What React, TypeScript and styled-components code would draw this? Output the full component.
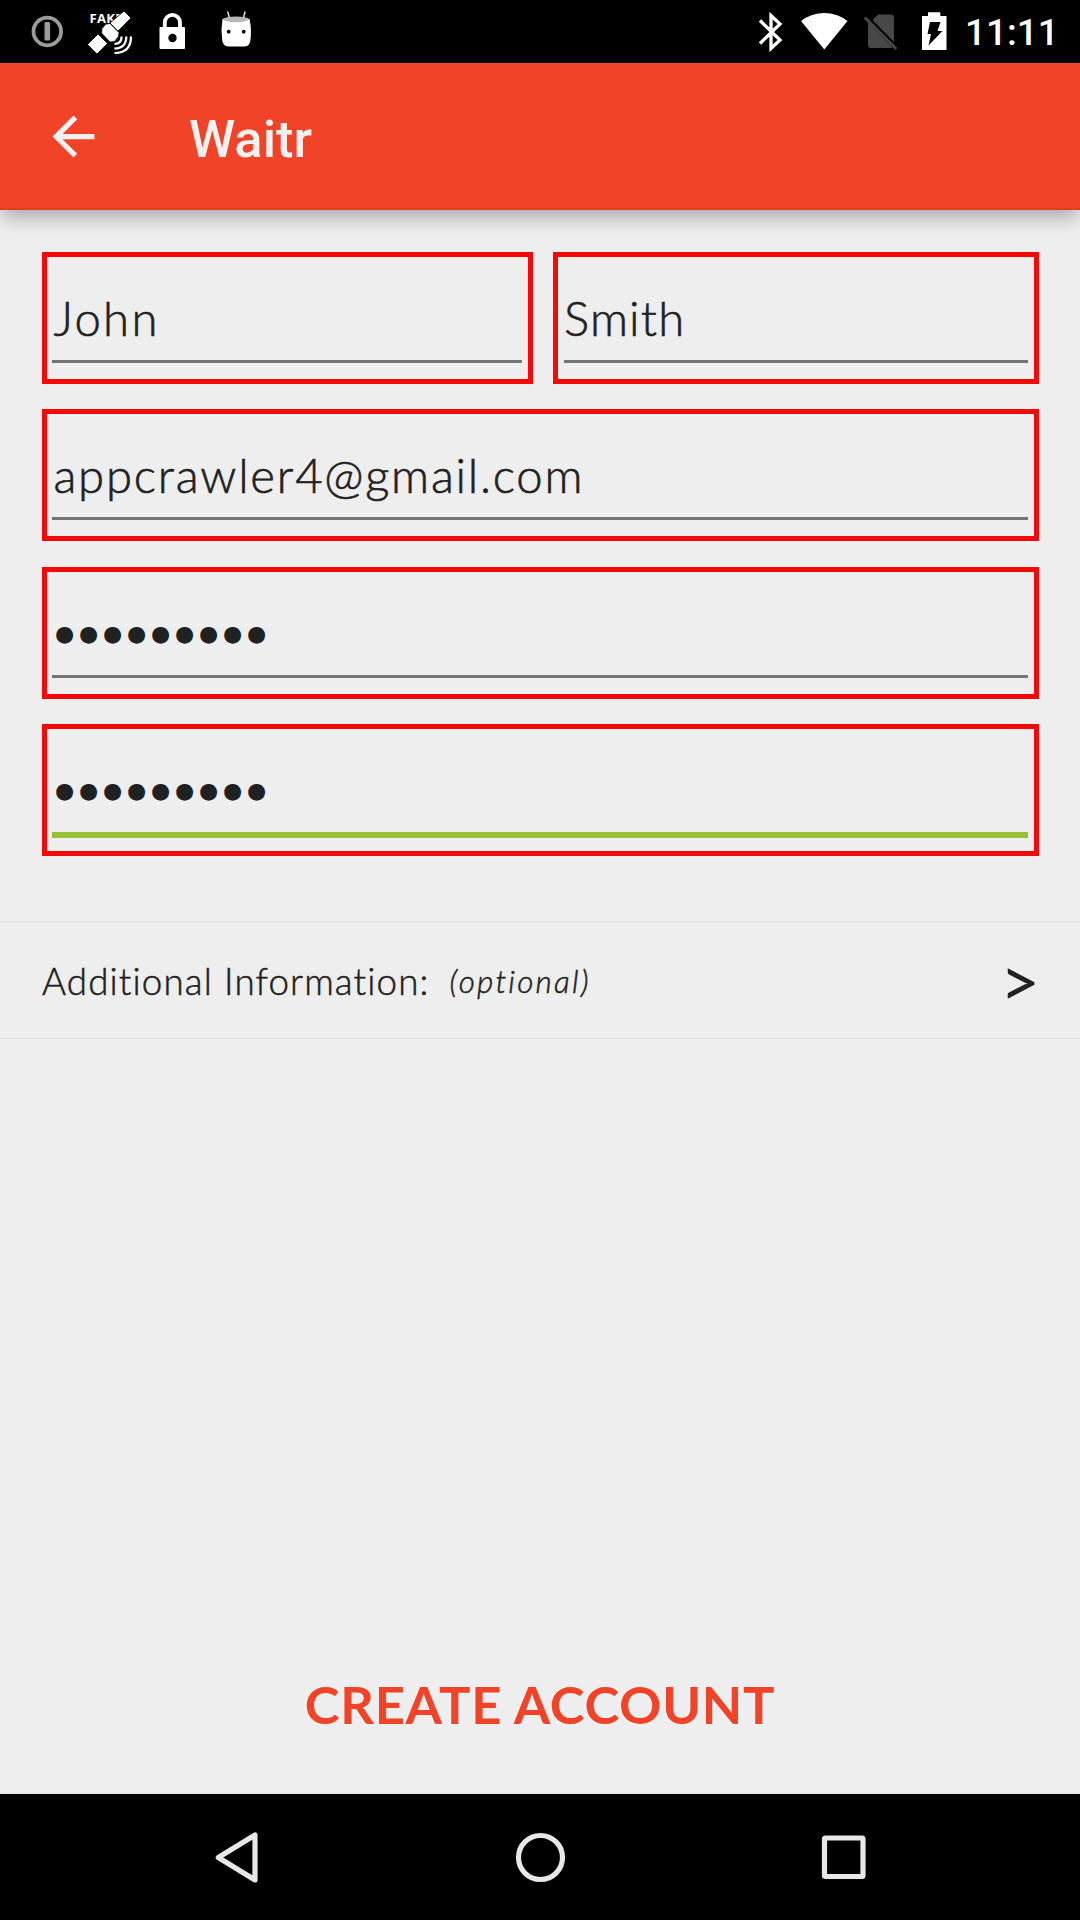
import React from 'react';
import styled, { createGlobalStyle } from 'styled-components';

const GlobalStyle = createGlobalStyle`
  * { box-sizing: border-box; }
  body { margin: 0; background: #eeeeee; }
`;

const Screen = styled.div`
  width: 1080px;
  height: 1920px;
  display: flex;
  flex-direction: column;
  overflow: hidden;
  background: #eeeeee;
  color: #212121;
  font-family: Lato, 'Open Sans', sans-serif;
`;

const StatusBar = styled.header`
  height: 63px;
  flex: none;
  display: flex;
  justify-content: space-between;
  background: #000;
  padding: 0 24px 0 31px;
`;

const StatusGroup = styled.div`
  display: flex;
  align-items: flex-start;
`;

const StatusIcon = styled.svg<{ $gap?: number }>`
  display: block;
  flex: none;
  margin-left: ${(p) => p.$gap ?? 0}px;
`;

const Clock = styled.span`
  margin-left: 17px;
  width: 91px;
  font: 500 37px/65px Roboto, sans-serif;
  color: #fff;
  white-space: nowrap;
`;

const AppBar = styled.div`
  position: relative;
  z-index: 1;
  height: 147px;
  flex: none;
  display: flex;
  align-items: center;
  padding: 2px 0 0 42px;
  background: #f04328;
  border-bottom: 2px solid #e83a20;
  box-shadow: 0 10px 18px -2px rgba(0, 0, 0, 0.28);
`;

const Title = styled.h1`
  margin: 4px 0 0 84px;
  font: 500 52.5px/62px Roboto, sans-serif;
  color: #f3f1f0;
`;

const Form = styled.form`
  display: flex;
  flex-direction: column;
  gap: 25.33px;
  padding: 42px 41px 0 42px;
`;

const NameRow = styled.div`
  display: grid;
  grid-template-columns: 491px 486px;
  gap: 20px;
`;

const Field = styled.div<{ $inset?: number }>`
  height: 132px;
  border: 5px solid #f20a08;
  padding: 33px 6px 0 ${(p) => p.$inset ?? 5}px;
`;

const Value = styled.div<{ $spacing?: number; $indent?: number }>`
  height: 70px;
  padding-left: ${(p) => p.$indent ?? 1.5}px;
  font-size: 47.25px;
  font-weight: 300;
  line-height: 56px;
  letter-spacing: ${(p) => p.$spacing ?? 0}px;
  white-space: nowrap;
  -webkit-text-stroke: 0.6px #212121;
`;

const Secret = styled(Value)`
  padding-left: 3px;
  font-family: 'DejaVu Sans', sans-serif;
  font-size: 22px;
  font-weight: 400;
  line-height: 57px;
  -webkit-text-stroke: 0;
`;

const Underline = styled.div<{ $active?: boolean }>`
  height: ${(p) => (p.$active ? 6 : 3)}px;
  background: ${(p) => (p.$active ? '#97c035' : '#757575')};
`;

const InfoRow = styled.div`
  height: 118px;
  margin-top: 65px;
  flex: none;
  display: flex;
  align-items: center;
  padding: 2px 44px 0 42px;
  border-top: 2px solid #e7e7e7;
  border-bottom: 1px solid #dfdfdf;
`;

const InfoLabel = styled.span`
  font-size: 36.75px;
  font-weight: 300;
  letter-spacing: 1.12px;
  white-space: nowrap;
  -webkit-text-stroke: 0.5px #212121;
`;

const InfoHint = styled.em`
  margin-left: 20px;
  font-size: 31.5px;
  font-weight: 300;
  letter-spacing: 2.2px;
  -webkit-text-stroke: 0.5px #212121;
`;

const Chevron = styled.span`
  margin-left: auto;
  margin-right: -4px;
  font-size: 69px;
  line-height: 58px;
`;

const CreateButton = styled.button`
  margin-top: auto;
  height: 178px;
  flex: none;
  border: 0;
  padding: 0 0 2px;
  background: transparent;
  color: #f04328;
  font-family: Lato, sans-serif;
  font-size: 52.5px;
  font-weight: 700;
  line-height: 62px;
  letter-spacing: 0.7px;
  white-space: nowrap;
`;

const NavBar = styled.nav`
  height: 126px;
  flex: none;
  display: flex;
  justify-content: space-between;
  align-items: center;
  padding: 0 201px 0 202px;
  background: #000;
`;

const NavIcon = styled.svg`
  display: block;
  fill: none;
  stroke: #e8e8e8;
  stroke-width: 5.2;
  stroke-linejoin: round;
`;

export default function App() {
  return (
    <Screen>
      <GlobalStyle />
      <StatusBar>
        <StatusGroup>
          <StatusIcon width="33" height="63" viewBox="31 0 33 63">
            <circle cx="47.3" cy="31.5" r="13.8" fill="none" stroke="#9c9c9c" strokeWidth="3.8" />
            <rect x="44.5" y="22" width="5.6" height="18.5" rx="1.5" fill="#9c9c9c" />
          </StatusIcon>
          <StatusIcon $gap={23} width="47" height="63" viewBox="87 0 47 63">
            <text x="89.5" y="22.8" fontFamily="Open Sans, sans-serif" fontWeight="700" fontSize="13" fill="#fff" textLength="33">FAKE</text>
            <g fill="#fff" stroke="#000" strokeWidth="0.8">
              <path d="M124 11l7 7-13 13-8-8z" />
              <path d="M98 34l9.500 9.500-10.500 10.500-9.500-9.500z" />
              <path d="M106 24l4-.5 9 9-.5 4-4 5-4.500.5-8.500-9 .5-4.500z" />
            </g>
            <g fill="none" stroke="#fff" strokeWidth="2.2">
              <path d="M121.500 36.500q.5 7-7 7.500" />
              <path d="M126.300 36.500q0 12-12 12" />
              <path d="M131 36.500q0 16.500-16.500 16.500" />
            </g>
          </StatusIcon>
          <StatusIcon $gap={25} width="27" height="63" viewBox="159 0 27 63">
            <path d="M164.800 29v-6.500a7.600 7.600 0 0 1 15.200 0V29" fill="none" stroke="#fff" strokeWidth="3.800" />
            <rect x="159.500" y="27" width="25.500" height="22" rx="1" fill="#fff" />
            <circle cx="172.500" cy="38" r="4.200" fill="#000" />
          </StatusIcon>
          <StatusIcon $gap={34} width="33" height="63" viewBox="220 0 33 63">
            <path d="M227.600 11.500l2 7M245.200 11.500l-2 7" stroke="#ddd" strokeWidth="1.500" />
            <path d="M222.500 19q14-4 27 0 2.500 11 .8 22-.8 5.500-6.300 5.500h-15q-5.500 0-6.700-5.500-1.700-11 .2-22z" fill="#fff" />
            <ellipse cx="236" cy="19.300" rx="12.800" ry="2.900" fill="#b5b5b5" />
            <circle cx="228.700" cy="31.700" r="1.900" fill="#000" />
            <circle cx="243.700" cy="31.700" r="1.900" fill="#000" />
          </StatusIcon>
        </StatusGroup>
        <StatusGroup>
          <StatusIcon width="26" height="63" viewBox="758 0 26 63">
            <path d="M760 20.500l20 19.500-9 8.500v-33l9 8.500-20 19.500" fill="none" stroke="#fff" strokeWidth="3.300" />
          </StatusIcon>
          <StatusIcon $gap={16} width="48" height="63" viewBox="800 0 48 63">
            <path d="M801 21q10.500-8 23.300-8t23.200 8L824.300 49.500z" fill="#fff" />
          </StatusIcon>
          <StatusIcon $gap={15} width="36" height="63" viewBox="863 0 36 63">
            <path d="M878 14.500H891q3 0 3 3v24.500L872.500 20zM868 22.500L892.500 47.500Q891.500 48 890 48h-19q-3 0-3-3z" fill="#484848" />
            <path d="M864.800 17.500l31.500 31.500" stroke="#484848" strokeWidth="3" />
          </StatusIcon>
          <StatusIcon $gap={22} width="27" height="63" viewBox="921 0 27 63">
            <path d="M928 12.300h12.300V16h6.200v34H922V16h6z" fill="#fff" />
            <path d="M930 22h10.500l-3 9h5L928.500 45.500l2.500-11.500h-3.500z" fill="#000" />
          </StatusIcon>
          <Clock>11:11</Clock>
        </StatusGroup>
      </StatusBar>

      <AppBar>
        <svg width="63" height="63" viewBox="0 0 24 24">
          <path d="M20 11H7.830l5.590-5.590L12 4l-8 8 8 8 1.410-1.410L7.830 13H20v-2z" fill="#f3f1f0" />
        </svg>
        <Title>Waitr</Title>
      </AppBar>

      <Form>
        <NameRow>
          <Field>
            <Value $spacing={2.3}>John</Value>
            <Underline />
          </Field>
          <Field $inset={6}>
            <Value $spacing={1.2} $indent={0}>Smith</Value>
            <Underline />
          </Field>
        </NameRow>
        <Field>
          <Value $spacing={1.75}>appcrawler4@gmail.com</Value>
          <Underline />
        </Field>
        <Field>
          <Secret $spacing={4.8}>●●●●●●●●●</Secret>
          <Underline />
        </Field>
        <Field>
          <Secret $spacing={4.8}>●●●●●●●●●</Secret>
          <Underline $active />
        </Field>
      </Form>

      <InfoRow>
        <InfoLabel>Additional Information:</InfoLabel>
        <InfoHint>(optional)</InfoHint>
        <Chevron>&gt;</Chevron>
      </InfoRow>

      <CreateButton type="button">CREATE ACCOUNT</CreateButton>

      <NavBar>
        <NavIcon width="70" height="70" viewBox="0 0 70 70">
          <path d="M16.300 35.500L53 13v45z" />
        </NavIcon>
        <NavIcon width="70" height="70" viewBox="0 0 70 70">
          <circle cx="34.500" cy="35.500" r="22" />
        </NavIcon>
        <NavIcon width="70" height="70" viewBox="0 0 70 70">
          <rect x="15.500" y="16" width="38.500" height="38.500" rx="1" />
        </NavIcon>
      </NavBar>
    </Screen>
  );
}
